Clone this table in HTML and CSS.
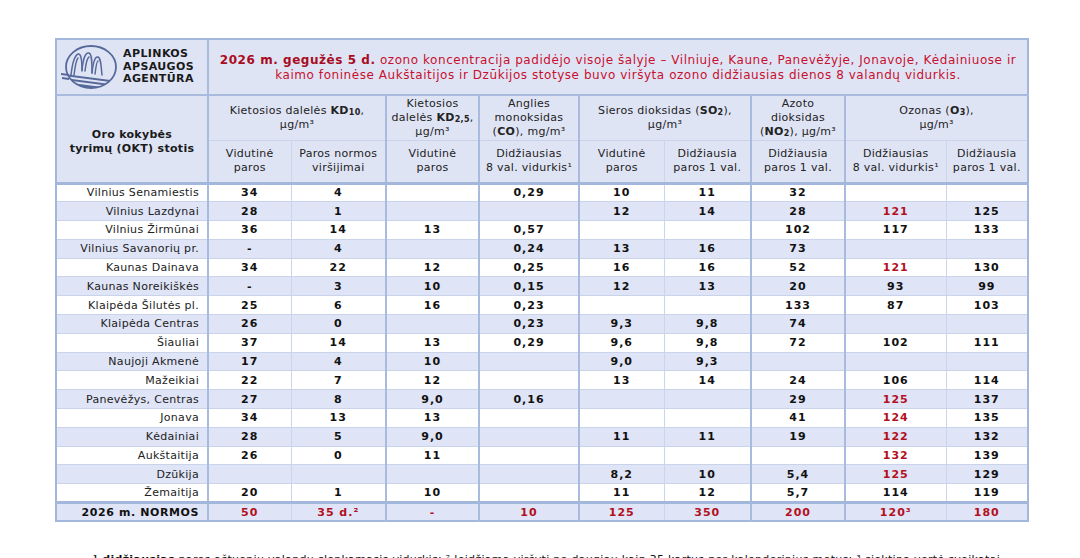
FILE: index.html
```html
<!DOCTYPE html>
<html lang="lt">
<head>
<meta charset="utf-8">
<title>Oro kokybė</title>
<link rel="stylesheet" href="styles.css">
</head>
<body>
<div class="page">
<table class="aq">
<colgroup>
<col class="c0"><col class="c1"><col class="c2"><col class="c3"><col class="c4"><col class="c5"><col class="c6"><col class="c7"><col class="c8"><col class="c9">
</colgroup>
<thead>
<tr class="r1">
<th class="logo-cell">
<div class="logo">
<svg class="logo-mark" viewBox="0 0 56 46" width="56" height="46" aria-hidden="true">
<defs><clipPath id="cl"><ellipse cx="30" cy="23" rx="25" ry="21"/></clipPath></defs>
<g fill="none" stroke="#56699a" stroke-width="1.5" stroke-linecap="round">
<path d="M10 31 C 11 22, 13 12, 17 10 C 20 9, 21 16, 21 27"/>
<path d="M21 26 C 22 16, 24 8, 28 9 C 31 10, 31 19, 31 29"/>
<path d="M31 29 C 32 19, 34 12, 37 13 C 40 14, 40 22, 41 31"/>
<path d="M13 31 C 14 23, 15 16, 17 14"/>
<path d="M24 27 C 25 19, 26 14, 28 13"/>
<path d="M34 30 C 35 22, 36 17, 37 17"/>
</g>
<g clip-path="url(#cl)" fill="#56699a">
<path d="M4 30 L 56 37 L 56 39 L 4 32 Z"/>
<path d="M4 34 L 56 41 L 56 43 L 4 36 Z"/>
<path d="M4 38 L 56 45 L 56 56 L 4 56 Z"/>
</g>
<path d="M0 29 L 8 30 L 8 32 L 0 31 Z M1 33 L 8 34 L 8 36 L 1 35 Z" fill="#56699a"/>
<ellipse cx="30" cy="23" rx="25" ry="21" fill="none" stroke="#56699a" stroke-width="1.8"/>
</svg>
<div class="logo-text">APLINKOS<br>APSAUGOS<br>AGENTŪRA</div>
</div>
</th>
<th colspan="9" class="title"><b>2026 m. gegužės 5 d.</b> ozono koncentracija padidėjo visoje šalyje – Vilniuje, Kaune, Panevėžyje, Jonavoje, Kėdainiuose ir kaimo foninėse Aukštaitijos ir Dzūkijos stotyse buvo viršyta ozono didžiausias dienos 8 valandų vidurkis.</th>
</tr>
<tr class="r2">
<th rowspan="2" class="station-h">Oro kokybės<br>tyrimų (OKT) stotis</th>
<th colspan="2" class="g">Kietosios dalelės <b>KD<span class="sb">10</span></b>,<br>µg/m³</th>
<th class="g">Kietosios<br>dalelės <b>KD<span class="sb">2,5</span></b>,<br>µg/m³</th>
<th class="g">Anglies<br>monoksidas<br>(<b>CO</b>), mg/m³</th>
<th colspan="2" class="g">Sieros dioksidas (<b>SO<span class="sb">2</span></b>),<br>µg/m³</th>
<th class="g">Azoto<br>dioksidas<br>(<b>NO<span class="sb">2</span></b>), µg/m³</th>
<th colspan="2" class="g">Ozonas (<b>O<span class="sb">3</span></b>),<br>µg/m³</th>
</tr>
<tr class="r3">
<th class="g">Vidutinė<br>paros</th>
<th class="s">Paros normos<br>viršijimai</th>
<th class="g">Vidutinė<br>paros</th>
<th class="g">Didžiausias<br>8 val. vidurkis¹</th>
<th class="g">Vidutinė<br>paros</th>
<th class="s">Didžiausia<br>paros 1 val.</th>
<th class="g">Didžiausia<br>paros 1 val.</th>
<th class="g">Didžiausias<br>8 val. vidurkis¹</th>
<th class="s">Didžiausia<br>paros 1 val.</th>
</tr>
</thead>
<tbody>
<tr><td class="st">Vilnius Senamiestis</td><td class="g">34</td><td class="s">4</td><td class="g"></td><td class="g">0,29</td><td class="g">10</td><td class="s">11</td><td class="g">32</td><td class="g"></td><td class="s"></td></tr>
<tr class="alt"><td class="st">Vilnius Lazdynai</td><td class="g">28</td><td class="s">1</td><td class="g"></td><td class="g"></td><td class="g">12</td><td class="s">14</td><td class="g">28</td><td class="g red">121</td><td class="s">125</td></tr>
<tr><td class="st">Vilnius Žirmūnai</td><td class="g">36</td><td class="s">14</td><td class="g">13</td><td class="g">0,57</td><td class="g"></td><td class="s"></td><td class="g">102</td><td class="g">117</td><td class="s">133</td></tr>
<tr class="alt"><td class="st">Vilnius Savanorių pr.</td><td class="g">-</td><td class="s">4</td><td class="g"></td><td class="g">0,24</td><td class="g">13</td><td class="s">16</td><td class="g">73</td><td class="g"></td><td class="s"></td></tr>
<tr><td class="st">Kaunas Dainava</td><td class="g">34</td><td class="s">22</td><td class="g">12</td><td class="g">0,25</td><td class="g">16</td><td class="s">16</td><td class="g">52</td><td class="g red">121</td><td class="s">130</td></tr>
<tr class="alt"><td class="st">Kaunas Noreikiškės</td><td class="g">-</td><td class="s">3</td><td class="g">10</td><td class="g">0,15</td><td class="g">12</td><td class="s">13</td><td class="g">20</td><td class="g">93</td><td class="s">99</td></tr>
<tr><td class="st">Klaipėda Šilutės pl.</td><td class="g">25</td><td class="s">6</td><td class="g">16</td><td class="g">0,23</td><td class="g"></td><td class="s"></td><td class="g">133</td><td class="g">87</td><td class="s">103</td></tr>
<tr class="alt"><td class="st">Klaipėda Centras</td><td class="g">26</td><td class="s">0</td><td class="g"></td><td class="g">0,23</td><td class="g">9,3</td><td class="s">9,8</td><td class="g">74</td><td class="g"></td><td class="s"></td></tr>
<tr><td class="st">Šiauliai</td><td class="g">37</td><td class="s">14</td><td class="g">13</td><td class="g">0,29</td><td class="g">9,6</td><td class="s">9,8</td><td class="g">72</td><td class="g">102</td><td class="s">111</td></tr>
<tr class="alt"><td class="st">Naujoji Akmenė</td><td class="g">17</td><td class="s">4</td><td class="g">10</td><td class="g"></td><td class="g">9,0</td><td class="s">9,3</td><td class="g"></td><td class="g"></td><td class="s"></td></tr>
<tr><td class="st">Mažeikiai</td><td class="g">22</td><td class="s">7</td><td class="g">12</td><td class="g"></td><td class="g">13</td><td class="s">14</td><td class="g">24</td><td class="g">106</td><td class="s">114</td></tr>
<tr class="alt"><td class="st">Panevėžys, Centras</td><td class="g">27</td><td class="s">8</td><td class="g">9,0</td><td class="g">0,16</td><td class="g"></td><td class="s"></td><td class="g">29</td><td class="g red">125</td><td class="s">137</td></tr>
<tr><td class="st">Jonava</td><td class="g">34</td><td class="s">13</td><td class="g">13</td><td class="g"></td><td class="g"></td><td class="s"></td><td class="g">41</td><td class="g red">124</td><td class="s">135</td></tr>
<tr class="alt"><td class="st">Kėdainiai</td><td class="g">28</td><td class="s">5</td><td class="g">9,0</td><td class="g"></td><td class="g">11</td><td class="s">11</td><td class="g">19</td><td class="g red">122</td><td class="s">132</td></tr>
<tr><td class="st">Aukštaitija</td><td class="g">26</td><td class="s">0</td><td class="g">11</td><td class="g"></td><td class="g"></td><td class="s"></td><td class="g"></td><td class="g red">132</td><td class="s">139</td></tr>
<tr class="alt"><td class="st">Dzūkija</td><td class="g"></td><td class="s"></td><td class="g"></td><td class="g"></td><td class="g">8,2</td><td class="s">10</td><td class="g">5,4</td><td class="g red">125</td><td class="s">129</td></tr>
<tr><td class="st">Žemaitija</td><td class="g">20</td><td class="s">1</td><td class="g">10</td><td class="g"></td><td class="g">11</td><td class="s">12</td><td class="g">5,7</td><td class="g">114</td><td class="s">119</td></tr>
<tr class="norm"><td class="st">2026 m. NORMOS</td><td class="g red">50</td><td class="s red">35 d.²</td><td class="g red">-</td><td class="g red">10</td><td class="g red">125</td><td class="s red">350</td><td class="g red">200</td><td class="g red">120³</td><td class="s red">180</td></tr>
</tbody>
</table>
<p class="foot"><b>¹ didžiausias</b> paros aštuonių valandų slenkamasis vidurkis; ² leidžiama viršyti ne daugiau kaip 35 kartus per kalendorinius metus; ³ siektina vertė sveikatai.</p>
</div>
</body>
</html>
```
FILE: styles.css
```css
html, body {
  margin: 0;
  padding: 0;
  background: #ffffff;
}
body {
  font-family: "DejaVu Sans", Verdana, sans-serif;
  color: #111111;
  font-size: 11px;
}
.page {
  padding: 38px 0 0 55px;
}
.aq {
  border-collapse: collapse;
  table-layout: fixed;
  width: 972px;
  border: 2px solid #a3b6dc;
}
.c0 { width: 152px; }
.c1 { width: 83px; }
.c2 { width: 95px; }
.c3 { width: 93px; }
.c4 { width: 100px; }
.c5 { width: 85px; }
.c6 { width: 87px; }
.c7 { width: 94px; }
.c8 { width: 101px; }
.c9 { width: 82px; }

.aq th, .aq td {
  padding: 0;
  text-align: center;
  vertical-align: middle;
  font-size: 11px;
  line-height: 14px;
  letter-spacing: 0.3px;
  border-top: 1px solid #c9d3ea;
  border-bottom: 1px solid #c9d3ea;
}
.aq th {
  background: #dfe4f5;
  font-weight: normal;
  color: #222222;
}
.aq .g { border-left: 2px solid #a8badd; }
.aq .s { border-left: 1px solid #cbd5eb; }
.aq .st, .aq .station-h, .aq .logo-cell { border-right: 2px solid #a8badd; }

.r1 { height: 56px; }
.r2 { height: 45px; }
.r3 { height: 43px; }
.r1 th { border-bottom: 2px solid #a8badd; }
.r3 th, .station-h { border-bottom: 3px solid #a3b6dc !important; }

.logo-cell { padding: 0; }
.logo {
  display: flex;
  align-items: center;
  gap: 6px;
  padding-left: 4px;
}
.logo-mark { display: block; flex: none; }
.aq .logo-text {
  font-weight: bold;
  font-size: 11px;
  line-height: 12.5px;
  text-align: left;
  color: #1a1a1a;
  letter-spacing: 0.4px;
}
.aq th.title {
  font-size: 12px;
  line-height: 15px;
  letter-spacing: 0.55px;
  color: #c8102e;
  padding: 2px 10px 0;
}
.title b { color: #a80c1e; }
.aq th.station-h {
  font-weight: bold;
  color: #1a1a1a;
  padding-top: 6px;
}
.sb {
  font-size: 8px;
  font-weight: bold;
  vertical-align: -1px;
  line-height: 0;
}

.aq tbody tr { height: 18.8px; }
.aq tbody td {
  font-weight: bold;
  color: #111111;
  background: #ffffff;
  line-height: 13px;
  letter-spacing: 1px;
}
.aq tbody tr.alt td { background: #dfe4f6; }
.aq tbody td.st {
  font-weight: normal;
  text-align: right;
  padding-right: 8px;
  letter-spacing: 0.3px;
  color: #222222;
}
.aq tbody tr.norm td {
  background: #dfe4f6;
  border-top: 3px solid #a3b6dc;
}
.aq tbody tr.norm td.st { font-weight: bold; color: #111111; letter-spacing: 0.6px; }
.aq td.red { color: #b3101e; }

.foot {
  margin: 31px 0 0 38px;
  font-size: 11px;
  line-height: 14px;
  letter-spacing: 0.3px;
  color: #111111;
  white-space: nowrap;
}
```
